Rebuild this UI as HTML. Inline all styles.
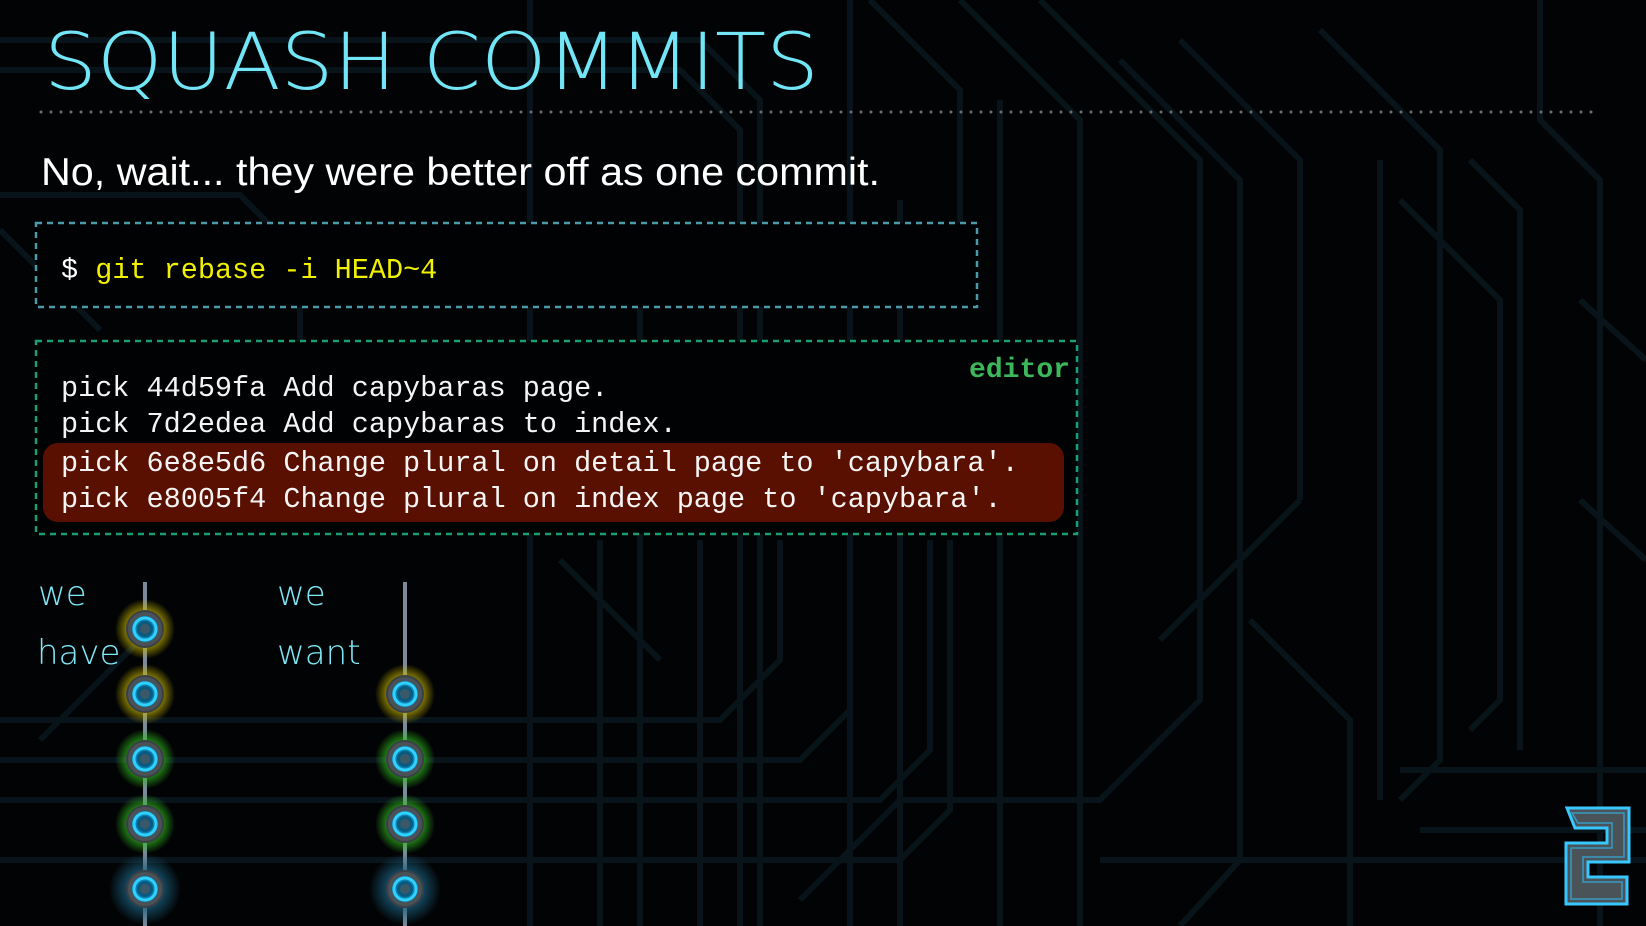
<!DOCTYPE html>
<html><head><meta charset="utf-8"><style>
html,body{margin:0;padding:0;background:#020304;}
body{width:1646px;height:926px;position:relative;overflow:hidden;font-family:"Liberation Sans",sans-serif;}
svg{position:absolute;left:0;top:0}
.mono{font-family:"Liberation Mono",monospace;}
</style></head><body>
<svg width="1646" height="926" viewBox="0 0 1646 926">
<defs>
<radialGradient id="gy"><stop offset="0.45" stop-color="#c8b800" stop-opacity="0.9"/><stop offset="1" stop-color="#c8b800" stop-opacity="0"/></radialGradient>
<radialGradient id="gg"><stop offset="0.45" stop-color="#30c020" stop-opacity="0.9"/><stop offset="1" stop-color="#30c020" stop-opacity="0"/></radialGradient>
<radialGradient id="gb"><stop offset="0.45" stop-color="#1a6080" stop-opacity="0.8"/><stop offset="1" stop-color="#1a6080" stop-opacity="0"/></radialGradient>
<g id="node"><circle r="19" fill="#3a4046"/><circle r="17" fill="#4a5258"/><circle r="13" fill="#0a80b0"/><circle r="11" fill="none" stroke="#30d0ff" stroke-width="3"/><circle r="8" fill="#0a5a80"/><circle r="5" fill="#3a5868"/></g>
</defs>
<g fill="none" stroke="#09141a" stroke-width="6">
<path d="M0 40 H700 L760 100 V926"/><path d="M0 70 H680 L740 130 V926"/>
<path d="M0 195 H240 L300 255 V400 L200 500"/><path d="M0 230 L100 330"/>
<path d="M870 0 L960 90 V300"/><path d="M960 0 L1080 120 V926"/><path d="M1040 0 L1200 160 V700 L1100 800 H900 L800 900"/>
<path d="M850 0 V926"/><path d="M900 200 V926"/><path d="M640 300 V926"/><path d="M600 540 V926"/>
<path d="M0 760 H800 L850 710 V540"/><path d="M0 800 H880 L930 750 V540"/><path d="M0 860 H900 L950 810 V540"/>
<path d="M0 720 H720 L780 660 V540"/><path d="M40 740 L160 620"/>
<path d="M1120 60 L1240 180 V860 L1180 926"/><path d="M1180 40 L1300 160 V500"/><path d="M1380 160 V800"/>
<path d="M1320 30 L1440 150 V760 L1400 800"/><path d="M1400 200 L1500 300 V700 L1470 730"/><path d="M1470 160 L1520 210 V750"/>
<path d="M1540 0 V120 L1600 180 V926"/><path d="M1580 300 L1646 360"/><path d="M1580 500 L1646 560"/>
<path d="M1000 100 V926"/><path d="M1300 500 L1160 640"/><path d="M1250 620 L1350 720 V926"/>
<path d="M1100 860 H1646"/><path d="M1400 770 H1646"/><path d="M1420 830 H1646"/>
<path d="M530 0 V926"/><path d="M700 540 V926"/><path d="M560 560 L660 660"/>
</g>
<text x="44" y="89" font-family="DejaVu Sans" font-weight="200" font-size="78" fill="#72e6f6" textLength="775" lengthAdjust="spacingAndGlyphs">SQUASH COMMITS</text>
<line x1="41" y1="112" x2="1592" y2="112" stroke="#6a6e70" stroke-width="3" stroke-dasharray="0 10" stroke-linecap="round"/>
<text x="41" y="185" font-family="Liberation Sans" font-size="39" fill="#ffffff" textLength="839" lengthAdjust="spacingAndGlyphs">No, wait... they were better off as one commit.</text>
<rect x="36" y="223" width="941" height="84" fill="#010203" stroke="#4a9aaa" stroke-width="2.5" stroke-dasharray="6 5"/>
<text x="61" y="278" class="mono" font-size="28.5" fill="#ffffff">$ <tspan fill="#f0f000">git rebase -i HEAD~4</tspan></text>
<rect x="36" y="341" width="1041" height="193" fill="#010203" stroke="#18a070" stroke-width="2.5" stroke-dasharray="6 5"/>
<rect x="43" y="443" width="1021" height="79" rx="15" fill="#5a1000"/>
<text x="969" y="377" class="mono" font-size="28" font-weight="bold" fill="#3cb85a" textLength="101" lengthAdjust="spacingAndGlyphs">editor</text>
<g class="mono" font-size="28.5" fill="#f4f4f4">
<text x="61" y="396">pick 44d59fa Add capybaras page.</text>
<text x="61" y="432">pick 7d2edea Add capybaras to index.</text>
<text x="61" y="471">pick 6e8e5d6 Change plural on detail page to 'capybara'.</text>
<text x="61" y="507">pick e8005f4 Change plural on index page to 'capybara'.</text>
</g>
<g font-family="DejaVu Sans" font-weight="200" font-size="34" fill="#7fe8f6">
<text x="38" y="605">we</text><text x="37" y="664">have</text>
<text x="277" y="605">we</text><text x="277" y="664">want</text>
</g>
<line x1="145" y1="582" x2="145" y2="926" stroke="#7a8a98" stroke-width="4"/>
<line x1="405" y1="582" x2="405" y2="926" stroke="#7a8a98" stroke-width="4"/>
<circle cx="145" cy="629" r="30" fill="url(#gy)"/><circle cx="145" cy="694" r="30" fill="url(#gy)"/>
<circle cx="145" cy="759" r="30" fill="url(#gg)"/><circle cx="145" cy="824" r="30" fill="url(#gg)"/>
<circle cx="145" cy="889" r="36" fill="url(#gb)"/>
<circle cx="405" cy="694" r="30" fill="url(#gy)"/><circle cx="405" cy="759" r="30" fill="url(#gg)"/>
<circle cx="405" cy="824" r="30" fill="url(#gg)"/><circle cx="405" cy="889" r="36" fill="url(#gb)"/>
<use href="#node" x="145" y="629"/><use href="#node" x="145" y="694"/><use href="#node" x="145" y="759"/><use href="#node" x="145" y="824"/><use href="#node" x="145" y="889"/>
<use href="#node" x="405" y="694"/><use href="#node" x="405" y="759"/><use href="#node" x="405" y="824"/><use href="#node" x="405" y="889"/>
<path d="M1567 808 H1629 V862 H1588 V877 H1627 V904 H1566 V843 H1607 V828 H1575 Z" fill="#4a5458" stroke="#38c8ff" stroke-width="3" stroke-linejoin="miter"/>
<path d="M1572 813 H1624 V857 H1583 V882 H1622 V899 H1571 V848 H1612 V823 H1578 Z" fill="none" stroke="#30b8f0" stroke-width="1.5" opacity="0.7"/>
</svg>
</body></html>
